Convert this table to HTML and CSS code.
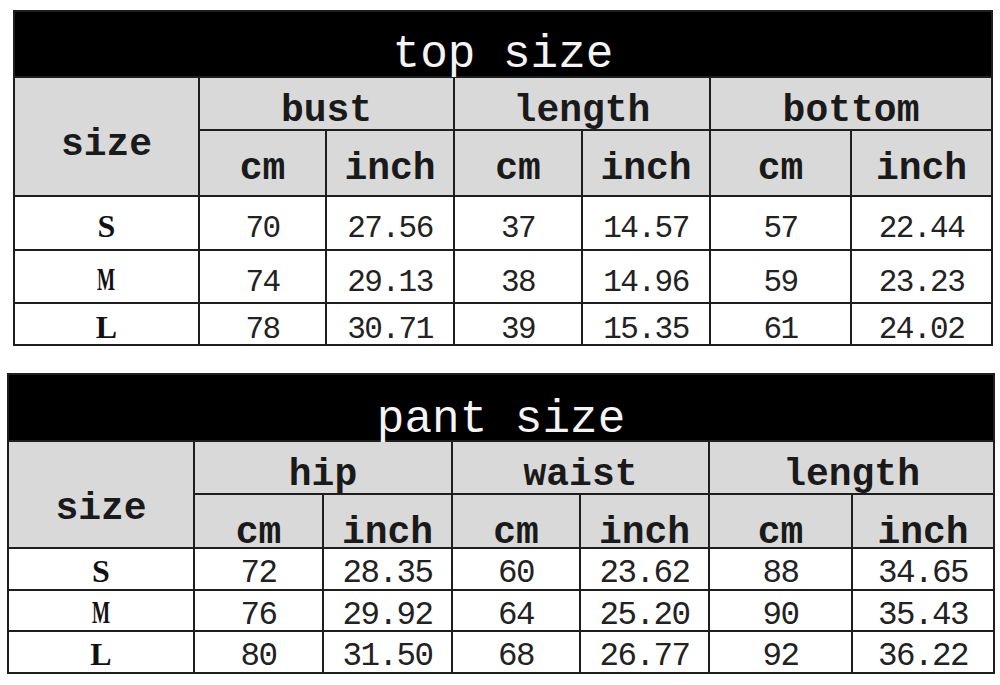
FILE: index.html
```html
<!DOCTYPE html>
<html>
<head>
<meta charset="utf-8">
<link rel="stylesheet" href="styles.css">
</head>
<body>
<table class="chart chart-top">
  <colgroup>
    <col class="c185"><col class="c127"><col class="c128"><col class="c128"><col class="c128"><col class="c141"><col class="c141">
  </colgroup>
  <tr class="r-title"><th class="title" colspan="7">top size</th></tr>
  <tr class="r-h1">
    <th class="head size-head" rowspan="2">size</th>
    <th class="head h1" colspan="2">bust</th>
    <th class="head h1" colspan="2">length</th>
    <th class="head h1" colspan="2">bottom</th>
  </tr>
  <tr class="r-h2">
    <th class="head h2">cm</th><th class="head h2">inch</th>
    <th class="head h2">cm</th><th class="head h2">inch</th>
    <th class="head h2">cm</th><th class="head h2">inch</th>
  </tr>
  <tr class="r-d1">
    <td class="lbl">S</td><td class="num">70</td><td class="num">27.56</td><td class="num">37</td><td class="num">14.57</td><td class="num">57</td><td class="num">22.44</td>
  </tr>
  <tr class="r-d2">
    <td class="lbl"><span class="narrow">M</span></td><td class="num">74</td><td class="num">29.13</td><td class="num">38</td><td class="num">14.96</td><td class="num">59</td><td class="num">23.23</td>
  </tr>
  <tr class="r-d3">
    <td class="lbl">L</td><td class="num">78</td><td class="num">30.71</td><td class="num">39</td><td class="num">15.35</td><td class="num">61</td><td class="num">24.02</td>
  </tr>
</table>

<table class="chart chart-pant">
  <colgroup>
    <col class="c186"><col class="c129"><col class="c129"><col class="c128"><col class="c129"><col class="c143"><col class="c142">
  </colgroup>
  <tr class="r-title"><th class="title" colspan="7">pant size</th></tr>
  <tr class="r-h1">
    <th class="head size-head" rowspan="2">size</th>
    <th class="head h1" colspan="2">hip</th>
    <th class="head h1" colspan="2">waist</th>
    <th class="head h1" colspan="2">length</th>
  </tr>
  <tr class="r-h2">
    <th class="head h2">cm</th><th class="head h2">inch</th>
    <th class="head h2">cm</th><th class="head h2">inch</th>
    <th class="head h2">cm</th><th class="head h2">inch</th>
  </tr>
  <tr class="r-d1">
    <td class="lbl">S</td><td class="num">72</td><td class="num">28.35</td><td class="num">60</td><td class="num">23.62</td><td class="num">88</td><td class="num">34.65</td>
  </tr>
  <tr class="r-d2">
    <td class="lbl"><span class="narrow">M</span></td><td class="num">76</td><td class="num">29.92</td><td class="num">64</td><td class="num">25.20</td><td class="num">90</td><td class="num">35.43</td>
  </tr>
  <tr class="r-d3">
    <td class="lbl">L</td><td class="num">80</td><td class="num">31.50</td><td class="num">68</td><td class="num">26.77</td><td class="num">92</td><td class="num">36.22</td>
  </tr>
</table>
</body>
</html>
```

FILE: styles.css
```css
html, body {
  margin: 0;
  padding: 0;
  background: #ffffff;
}

.chart {
  border-collapse: collapse;
  table-layout: fixed;
  font-family: "Liberation Mono", "DejaVu Sans Mono", monospace;
  color: #1a1a1a;
}

.chart th,
.chart td {
  border: 2px solid #1e1e1e;
  padding: 0;
  text-align: center;
  vertical-align: middle;
  line-height: 20px;
  white-space: nowrap;
  overflow: visible;
}

.chart-top {
  width: 978px;
  margin: 10px 0 0 13px;
}

.chart-pant {
  width: 986px;
  margin: 27px 0 0 7px;
}

.c185 { width: 185px; }
.c186 { width: 186px; }
.c127 { width: 127px; }
.c128 { width: 128px; }
.c129 { width: 129px; }
.c141 { width: 141px; }
.c142 { width: 142px; }
.c143 { width: 143px; }

.title {
  background: #000000;
  color: #f4f4f4;
  font-weight: normal;
  font-size: 46px;
}

.head {
  background: #d9d9d9;
  font-weight: bold;
  font-size: 38px;
}

.num {
  background: #ffffff;
  font-size: 31px;
  letter-spacing: -1.5px;
  color: #222222;
}

.lbl {
  background: #ffffff;
  font-family: "Liberation Serif", "DejaVu Serif", serif;
  font-weight: bold;
  font-size: 32px;
  color: #111111;
}

.narrow {
  display: inline-block;
  transform: scaleX(0.6);
}

/* top table rows */
.chart-top .r-title { height: 66px; }
.chart-top .r-h1 { height: 53px; }
.chart-top .r-h2 { height: 66px; }
.chart-top .r-d1 { height: 54px; }
.chart-top .r-d2 { height: 53px; }
.chart-top .r-d3 { height: 42px; }

.chart-top .title { padding-top: 22px; }
.chart-top .h1 { padding-top: 15px; }
.chart-top .h2 { padding-top: 12px; }
.chart-top .size-head { padding-top: 17px; }
.chart-top .num { padding-top: 12px; }
.chart-top .lbl { padding-top: 5px; }

/* pant table rows */
.chart-pant .r-title { height: 67px; }
.chart-pant .r-h1 { height: 53px; }
.chart-pant .r-h2 { height: 54px; }
.chart-pant .r-d1 { height: 42px; }
.chart-pant .r-d2 { height: 41px; }
.chart-pant .r-d3 { height: 42px; }

.chart-pant .title { padding-top: 25px; }
.chart-pant .h1 { padding-top: 14px; }
.chart-pant .h2 { padding-top: 23px; }
.chart-pant .size-head { padding-top: 29px; }
.chart-pant .num { padding-top: 10px; font-size: 32.5px; }
.chart-pant .lbl { padding-top: 3px; }
```
